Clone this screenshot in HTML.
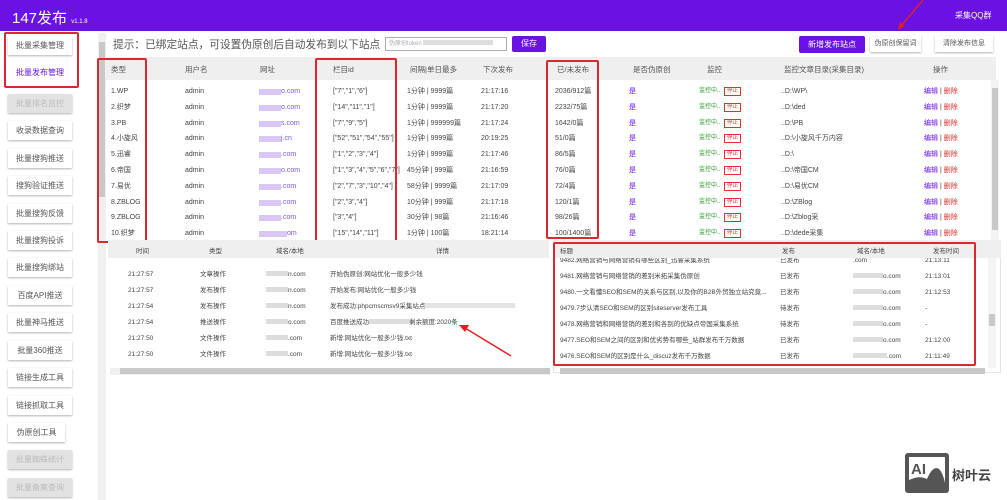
<!DOCTYPE html><html><head><meta charset="utf-8"><style>
*{margin:0;padding:0;box-sizing:border-box}
body{width:1007px;height:500px;overflow:hidden;background:#fff;font-family:"Liberation Sans","Noto Sans CJK SC",sans-serif;color:#444;position:relative;font-size:7px}
.a{position:absolute;white-space:nowrap}
.r span{line-height:9px}
.hd{left:0;top:0;width:1007px;height:31px;background:#6a12e3}
.sb{left:8px;width:64px;height:19px;background:#fff;box-shadow:0 1px 2px rgba(0,0,0,.3);font-size:8px;text-align:center;line-height:19px;color:#555}
.dis{background:#e2e2e2;color:#bbb}
.rb{border:2px solid #d9282f;border-radius:2px}
.bl{background:#d9c8f5;height:6px}
.pu{color:#6a12e3}
.btn{height:16px;font-size:7px;line-height:16px;text-align:center;box-shadow:0 1px 2px rgba(0,0,0,.3);background:#fff;color:#555}
.g{display:inline-block;height:5px;background:#ddd}
</style></head><body>
<div class="a hd"></div>
<div class="a" style="left:12px;top:7px;font-size:15px;color:#fff">147发布 <span style="font-size:6px">v1.1.8</span></div>
<div class="a" style="left:955px;top:10px;font-size:8px;color:#fff">采集QQ群</div>
<svg class="a" style="left:895px;top:0" width="30" height="32"><path d="M28 0 L6 26" stroke="#e02020" stroke-width="1.5"/><path d="M3 30 L5 22 L10 26Z" fill="#e02020"/></svg>

<div class="a sb" style="top:36px">批量采集管理</div>
<div class="a sb" style="top:63px;color:#6a12e3;box-shadow:none">批量发布管理</div>
<div class="a rb" style="left:4px;top:32px;width:75px;height:56px"></div>
<div class="a sb dis" style="top:94px">批量排名监控</div>
<div class="a sb" style="top:121px">收录数据查询</div>
<div class="a sb" style="top:149px">批量搜狗推送</div>
<div class="a sb" style="top:176px">搜狗验证推送</div>
<div class="a sb" style="top:204px">批量搜狗反馈</div>
<div class="a sb" style="top:231px">批量搜狗投诉</div>
<div class="a sb" style="top:258px">批量搜狗绑站</div>
<div class="a sb" style="top:286px">百度API推送</div>
<div class="a sb" style="top:313px">批量神马推送</div>
<div class="a sb" style="top:341px">批量360推送</div>
<div class="a sb" style="top:368px">链接生成工具</div>
<div class="a sb" style="top:396px">链接抓取工具</div>
<div class="a sb" style="top:423px;width:57px">伪原创工具</div>
<div class="a sb dis" style="top:450px">批量蜘蛛统计</div>
<div class="a sb dis" style="top:478px">批量备案查询</div>
<div class="a" style="left:98px;top:33px;width:8px;height:467px;background:#f0f0f0"></div>
<div class="a" style="left:99px;top:42px;width:6px;height:155px;background:#c8c8c8"></div>

<div class="a" style="left:113px;top:37px;font-size:10.7px;color:#555">提示：已绑定站点，可设置伪原创后自动发布到以下站点</div>
<div class="a" style="left:385px;top:37px;width:122px;height:14px;border:1px solid #aab;font-size:6px;color:#aaa;line-height:12px;padding-left:3px;background:#fff">伪原创token <span class="g" style="width:70px"></span></div>
<div class="a" style="left:512px;top:36px;width:34px;height:16px;background:#6a12e3;color:#fff;font-size:8px;text-align:center;line-height:16px;border-radius:2px">保存</div>
<div class="a" style="left:799px;top:36px;width:66px;height:17px;background:#6a12e3;color:#fff;font-size:8px;text-align:center;line-height:17px;border-radius:2px">新增发布站点</div>
<div class="a btn" style="left:870px;top:36px;width:51px">伪原创保留词</div>
<div class="a btn" style="left:935px;top:36px;width:58px">清除发布信息</div>

<div class="a" style="left:106px;top:57px;width:890px;height:23px;background:#efefef"></div>
<div class="a" style="left:991px;top:80px;width:8px;height:160px;background:#f3f3f3"></div>
<div class="a" style="left:992px;top:88px;width:6px;height:142px;background:#c8c8c8"></div>
<div class="a" style="left:0;top:64px;font-size:7.5px;color:#555;width:1007px;height:10px">
<span class="a" style="left:111px">类型</span><span class="a" style="left:185px">用户名</span><span class="a" style="left:260px">网址</span><span class="a" style="left:333px">栏目id</span><span class="a" style="left:410px">间隔|单日最多</span><span class="a" style="left:483px">下次发布</span><span class="a" style="left:557px">已/未发布</span><span class="a" style="left:633px">是否伪原创</span><span class="a" style="left:707px">监控</span><span class="a" style="left:784px">监控文章目录(采集目录)</span><span class="a" style="left:933px">操作</span></div>
<div id="rows"></div>
<script>
var d=[["1.WP","o.com",'["7","1","6"]',"1分钟 | 9999篇","21:17:16","2036/912篇","D:\\WP\\"],
["2.织梦","o.com",'["14","11","1"]',"1分钟 | 9999篇","21:17:20","2232/75篇","D:\\ded"],
["3.PB","s.com",'["7","9","5"]',"1分钟 | 999999篇","21:17:24","1642/0篇","D:\\PB"],
["4.小旋风","j.cn",'["52","51","54","55"]',"1分钟 | 9999篇","20:19:25","51/0篇","D:\\小旋风千万内容"],
["5.迅睿",".com",'["1","2","3","4"]',"1分钟 | 9999篇","21:17:46","86/5篇","D:\\"],
["6.帝国","o.com",'["1","3","4","5","6","7"]',"45分钟 | 999篇","21:16:59","76/0篇","D:\\帝国CM"],
["7.易优",".com",'["2","7","3","10","4"]',"58分钟 | 9999篇","21:17:09","72/4篇","D:\\易优CM"],
["8.ZBLOG",".com",'["2","3","4"]',"10分钟 | 999篇","21:17:18","120/1篇","D:\\ZBlog"],
["9.ZBLOG",".com",'["3","4"]',"30分钟 | 98篇","21:16:46","98/26篇","D:\\Zblog采"],
["10.织梦","om",'["15","14","11"]',"1分钟 | 100篇","18:21:14","100/1400篇","D:\\dede采集"]];
var h="";
d.forEach(function(r,i){var y=Math.round(87+i*15.8);
h+='<div class="a r" style="left:0;top:'+y+'px;width:1000px;height:9px">'+
'<span class="a" style="left:111px">'+r[0]+'</span><span class="a" style="left:185px">admin</span>'+
'<span class="a bl" style="left:259px;top:2px;width:'+(r[1].length<4?28:22)+'px"></span><span class="a" style="left:'+(r[1].length<4?287:281)+'px;color:#7a5ad0">'+r[1]+'</span>'+
'<span class="a" style="left:333px">'+r[2]+'</span><span class="a" style="left:407px">'+r[3]+'</span><span class="a" style="left:481px">'+r[4]+'</span>'+
'<span class="a" style="left:555px">'+r[5]+'</span><span class="a pu" style="left:629px">是</span>'+
'<span class="a" style="left:699px;color:#2a9a2a;font-size:6px">监控中..</span><span class="a" style="left:724px;border:1px solid #d33;color:#d33;font-size:5.5px;padding:0 2px;line-height:7px">停止</span>'+
'<span class="a" style="left:781px">..'+r[6]+'</span><span class="a" style="left:924px"><span class="pu">编辑</span> | <span style="color:#e03030">删除</span></span></div>';});
document.getElementById("rows").innerHTML=h;
</script>
<div class="a rb" style="left:97px;top:58px;width:50px;height:185px"></div>
<div class="a rb" style="left:315px;top:58px;width:82px;height:185px"></div>
<div class="a rb" style="left:546px;top:60px;width:53px;height:179px"></div>

<div class="a" style="left:108px;top:240px;width:441px;height:18px;background:#efefef"></div>
<div class="a" style="left:0;top:245px;width:560px;height:9px;font-size:6.5px">
<span class="a" style="left:136px">时间</span><span class="a" style="left:209px">类型</span><span class="a" style="left:276px">域名/本地</span><span class="a" style="left:436px">详情</span></div>
<div class="a r" style="left:108px;top:264px;width:441px;height:104px;font-size:6.5px">
<span class="a" style="left:20px;top:6px">21:27:57</span><span class="a" style="left:92px;top:6px">文章操作</span><span class="a" style="left:158px;top:6px"><span class="g" style="width:22px"></span>n.com</span><span class="a" style="left:222px;top:6px">开始伪原创:网站优化一般多少钱</span>
<span class="a" style="left:20px;top:22px">21:27:57</span><span class="a" style="left:92px;top:22px">发布操作</span><span class="a" style="left:158px;top:22px"><span class="g" style="width:22px"></span>n.com</span><span class="a" style="left:222px;top:22px">开始发布:网站优化一般多少钱</span>
<span class="a" style="left:20px;top:38px">21:27:54</span><span class="a" style="left:92px;top:38px">发布操作</span><span class="a" style="left:158px;top:38px"><span class="g" style="width:22px"></span>n.com</span><span class="a" style="left:222px;top:38px">发布成功:phpcmscmsv9采集站点<span class="g" style="width:90px;background:#e4e4e4"></span></span>
<span class="a" style="left:20px;top:54px">21:27:54</span><span class="a" style="left:92px;top:54px">推送操作</span><span class="a" style="left:158px;top:54px"><span class="g" style="width:22px"></span>o.com</span><span class="a" style="left:222px;top:54px">百度推送成功<span class="g" style="width:40px"></span>剩余额度:2020条</span>
<span class="a" style="left:20px;top:70px">21:27:50</span><span class="a" style="left:92px;top:70px">文件操作</span><span class="a" style="left:158px;top:70px"><span class="g" style="width:22px"></span>.com</span><span class="a" style="left:222px;top:70px">新增:网站优化一般多少钱.txt</span>
<span class="a" style="left:20px;top:86px">21:27:50</span><span class="a" style="left:92px;top:86px">文件操作</span><span class="a" style="left:158px;top:86px"><span class="g" style="width:22px"></span>.com</span><span class="a" style="left:222px;top:86px">新增:网站优化一般多少钱.txt</span>
</div>
<div class="a" style="left:110px;top:368px;width:440px;height:7px;background:#f0f0f0"></div>
<div class="a" style="left:120px;top:368px;width:430px;height:6px;background:#c8c8c8"></div>
<svg class="a" style="left:455px;top:320px" width="60" height="40"><path d="M56 36 L10 8" stroke="#e02020" stroke-width="1.5"/><path d="M4 5 L14 5 L10 12Z" fill="#e02020"/></svg>

<div class="a" style="left:553px;top:240px;width:448px;height:18px;background:#efefef"></div>
<div class="a" style="left:553px;top:258px;width:448px;height:115px;border:1px solid #e4e4e4;border-top:none"></div>
<div class="a" style="left:988px;top:258px;width:8px;height:110px;background:#f3f3f3"></div>
<div class="a" style="left:989px;top:314px;width:6px;height:12px;background:#c8c8c8"></div>
<div class="a" style="left:560px;top:368px;width:425px;height:6px;background:#c8c8c8"></div>
<div class="a" style="left:0;top:245px;width:1007px;height:9px;font-size:6.5px">
<span class="a" style="left:560px">标题</span><span class="a" style="left:782px">发布</span><span class="a" style="left:857px">域名/本地</span><span class="a" style="left:933px">发布时间</span></div>
<div class="a r" style="left:0;top:258px;width:1007px;height:108px;font-size:6.5px;overflow:hidden">
<span class="a" style="left:560px;top:-2px">9482.网络营销与网络营销有哪些区别_迅睿采集系统</span><span class="a" style="left:780px;top:-2px">已发布</span><span class="a" style="left:853px;top:-2px">.com</span><span class="a" style="left:925px;top:-2px">21:13:11</span>
<span class="a" style="left:560px;top:14px">9481.网络营销与网络营销的差别米拓采集伪原创</span><span class="a" style="left:780px;top:14px">已发布</span><span class="a" style="left:853px;top:14px"><span class="g" style="width:30px"></span>o.com</span><span class="a" style="left:925px;top:14px">21:13:01</span>
<span class="a" style="left:560px;top:30px">9480.一文看懂SEO和SEM的关系与区别,以及你的B2B外贸独立站究竟...</span><span class="a" style="left:780px;top:30px">已发布</span><span class="a" style="left:853px;top:30px"><span class="g" style="width:30px"></span>o.com</span><span class="a" style="left:925px;top:30px">21:12:53</span>
<span class="a" style="left:560px;top:46px">9479.7步认清SEO和SEM的区别siteserver发布工具</span><span class="a" style="left:780px;top:46px">待发布</span><span class="a" style="left:853px;top:46px"><span class="g" style="width:30px"></span>o.com</span><span class="a" style="left:925px;top:46px">-</span>
<span class="a" style="left:560px;top:62px">9478.网络营销和网络营销的差别和各别的优缺点帝国采集系统</span><span class="a" style="left:780px;top:62px">待发布</span><span class="a" style="left:853px;top:62px"><span class="g" style="width:30px"></span>o.com</span><span class="a" style="left:925px;top:62px">-</span>
<span class="a" style="left:560px;top:78px">9477.SEO和SEM之间的区别和优劣势有哪些_站群发布千万数据</span><span class="a" style="left:780px;top:78px">已发布</span><span class="a" style="left:853px;top:78px"><span class="g" style="width:30px"></span>o.com</span><span class="a" style="left:925px;top:78px">21:12:00</span>
<span class="a" style="left:560px;top:94px">9476.SEO和SEM的区别是什么_discuz发布千万数据</span><span class="a" style="left:780px;top:94px">已发布</span><span class="a" style="left:853px;top:94px"><span class="g" style="width:34px"></span>.com</span><span class="a" style="left:925px;top:94px">21:11:49</span>
</div>
<div class="a rb" style="left:553px;top:242px;width:423px;height:124px"></div>

<div class="a" style="left:905px;top:453px;width:44px;height:40px;background:#555;border-radius:3px"></div>
<svg class="a" style="left:905px;top:453px" width="44" height="40"><rect x="4" y="4" width="36" height="30" fill="#fff"/><text x="6" y="21" font-size="15" font-weight="bold" fill="#555" font-family="Liberation Sans">AI</text><path d="M4 34 L4 27 Q14 22 22 26 Q28 12 34 16 Q38 20 40 30 L40 34Z" fill="#555"/></svg>
<div class="a" style="left:952px;top:465px;font-size:13px;color:#444;font-weight:bold">树叶云</div>
</body></html>
